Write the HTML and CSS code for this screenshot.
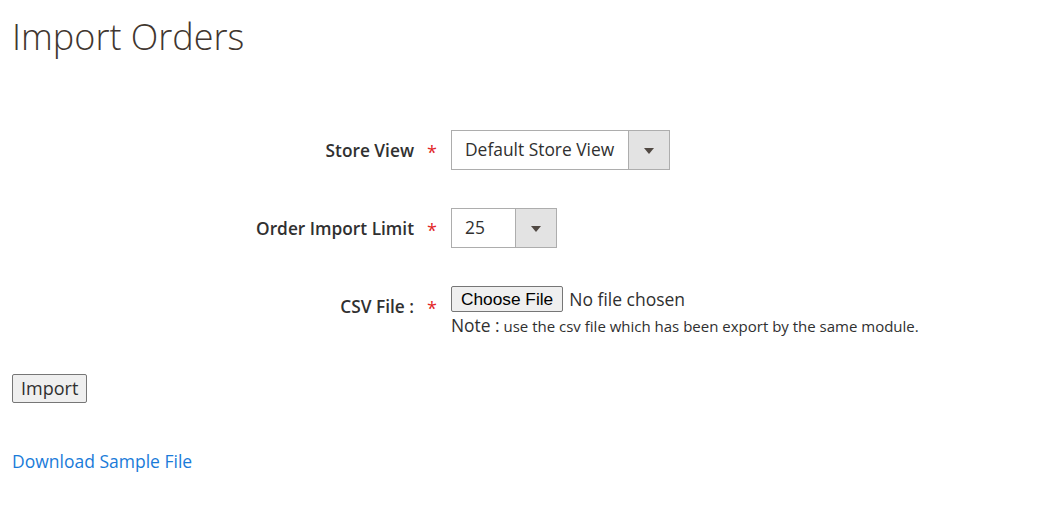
FILE: index.html
```html
<!DOCTYPE html>
<html lang="en">
<head>
<meta charset="utf-8">
<title>Import Orders</title>
<link rel="stylesheet" href="styles.css">
</head>
<body>
<div class="page">
  <h1 class="page-title">Import Orders</h1>
  <form class="import-form">
    <div class="field">
      <div class="field-label">Store View</div>
      <div class="field-req">*</div>
      <div class="field-control">
        <div class="select select-store">
          <span class="select-value">Default Store View</span>
          <span class="select-arrow"><span class="tri"></span></span>
        </div>
      </div>
    </div>
    <div class="field">
      <div class="field-label">Order Import Limit</div>
      <div class="field-req">*</div>
      <div class="field-control">
        <div class="select select-limit">
          <span class="select-value">25</span>
          <span class="select-arrow"><span class="tri"></span></span>
        </div>
      </div>
    </div>
    <div class="field field-file">
      <div class="field-label">CSV File :</div>
      <div class="field-req">*</div>
      <div class="field-control">
        <div class="file-input">
          <span class="file-btn">Choose File</span>
          <span class="file-status">No file chosen</span>
        </div>
        <div class="note"><span class="note-head">Note :</span> use the csv file which has been export by the same module.</div>
      </div>
    </div>
  </form>
  <div class="actions">
    <button type="button" class="import-btn">Import</button>
  </div>
  <a class="sample-link" href="#">Download Sample File</a>
</div>
</body>
</html>
```
FILE: styles.css
```css
html, body {
  margin: 0;
  padding: 0;
  background: #ffffff;
}
body {
  font-family: "Open Sans", "Liberation Sans", sans-serif;
  color: #303030;
}
.page {
  padding: 0 12px;
}
.page-title {
  margin: 0;
  padding-top: 14px;
  font-size: 36px;
  line-height: 46px;
  font-weight: 300;
  color: #41362f;
}
.import-form {
  margin-top: 70px;
}
.field {
  display: flex;
  align-items: flex-start;
  margin-bottom: 38px;
}
.field-label {
  width: 402px;
  text-align: right;
  font-size: 17.3px;
  font-weight: 600;
  line-height: 22px;
  padding-top: 10px;
  color: #303030;
}
.field-req {
  width: 37px;
  box-sizing: border-box;
  padding-left: 13px;
  color: #e22626;
  font-size: 18px;
  line-height: 22px;
  padding-top: 11px;
}
.select {
  display: flex;
  height: 40px;
  box-sizing: border-box;
  border: 1px solid #adadad;
  background: #fff;
  font-size: 17.4px;
  color: #303030;
}
.select-store { width: 219px; }
.select-limit { width: 106px; }
.select-value {
  flex: 1;
  padding-left: 13px;
  line-height: 36px;
}
.select-arrow {
  width: 40px;
  border-left: 1px solid #adadad;
  background: #e3e3e3;
  display: flex;
  align-items: center;
  justify-content: center;
}
.tri {
  width: 0;
  height: 0;
  border-left: 5px solid transparent;
  border-right: 5px solid transparent;
  border-top: 6px solid #514943;
  margin-top: 2px;
}
.file-input {
  display: flex;
  align-items: center;
  height: 26px;
}
.file-btn {
  font-family: "Liberation Sans", Arial, sans-serif;
  font-size: 17.3px;
  color: #000;
  background: #efefef;
  border: 1px solid #767676;
  border-radius: 2px;
  height: 26px;
  box-sizing: border-box;
  line-height: 24px;
  padding: 0 9px;
}
.file-status {
  margin-left: 6px;
  font-size: 17.5px;
  color: #303030;
}
.note {
  font-size: 15px;
  color: #303030;
  margin-top: 1px;
}
.note-head {
  font-size: 17.4px;
}
.actions {
  margin-top: -1px;
}
.import-btn {
  font-family: "Open Sans", "Liberation Sans", sans-serif;
  font-size: 18px;
  color: #303030;
  background: #efefef;
  border: 1px solid #767676;
  border-radius: 2px;
  height: 29px;
  padding: 0 8px;
  line-height: 27px;
  margin: 0;
}
.sample-link {
  display: inline-block;
  margin-top: 46px;
  font-size: 17.5px;
  color: #1a7bd9;
  text-decoration: none;
}
```
